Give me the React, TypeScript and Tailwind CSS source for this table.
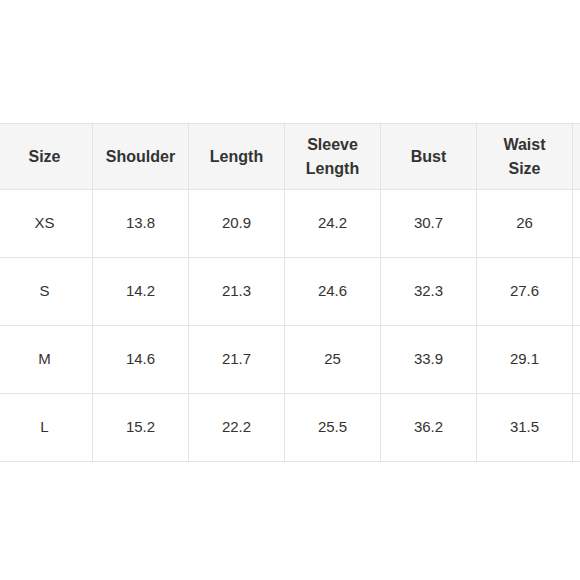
const headers = ['Size', 'Shoulder', 'Length', 'Sleeve Length', 'Bust', 'Waist Size', '']

const rows = [
  ['XS', '13.8', '20.9', '24.2', '30.7', '26', ''],
  ['S', '14.2', '21.3', '24.6', '32.3', '27.6', ''],
  ['M', '14.6', '21.7', '25', '33.9', '29.1', ''],
  ['L', '15.2', '22.2', '25.5', '36.2', '31.5', ''],
]

const SizeChart = () => {
  return (
    <div className="h-[580px] w-[580px] overflow-hidden bg-white font-['Liberation_Sans',Arial,sans-serif]">
      <div className="ml-[-4px] w-[680px] pt-[123px]">
        <table className="w-[672px] table-fixed border-collapse text-[#333]">
          <colgroup>
            {headers.map((h, i) => (
              <col key={i} className="w-[96px]" />
            ))}
          </colgroup>
          <thead>
            <tr className="h-[66px] bg-[#f5f5f5]">
              {headers.map((h, i) => (
                <th
                  key={i}
                  className="border border-[#e4e4e4] px-3 text-center text-[16px] font-bold leading-[24px]"
                >
                  {h}
                </th>
              ))}
            </tr>
          </thead>
          <tbody>
            {rows.map((row) => (
              <tr key={row[0]} className="h-[68px]">
                {row.map((cell, i) => (
                  <td
                    key={i}
                    className="border border-[#e4e4e4] text-center text-[15px] text-[#333]"
                  >
                    {cell}
                  </td>
                ))}
              </tr>
            ))}
          </tbody>
        </table>
      </div>
    </div>
  )
}

export default SizeChart
